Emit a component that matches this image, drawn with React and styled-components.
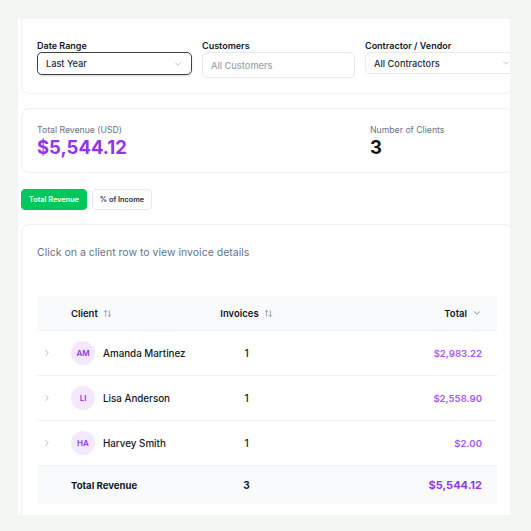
import React from 'react';
import styled, { createGlobalStyle } from 'styled-components';
import { ChevronDown, ChevronRight, ArrowUpDown } from 'lucide-react';

const GlobalStyle = createGlobalStyle`
  html, body {
    margin: 0;
    padding: 0;
    background: #f4f6f3;
    font-family: Inter, "Noto Sans", sans-serif;
    -webkit-font-smoothing: antialiased;
  }
  * { box-sizing: border-box; }
`;

const Page = styled.div`
  width: 531px;
  height: 531px;
  padding: 19px 21px 16px 18px;
`;

const Panel = styled.main`
  width: 492px;
  height: 496px;
  background: #ffffff;
  overflow: hidden;
`;

const Content = styled.div`
  margin-top: -9px;
  padding-left: 3px;
  display: flex;
  flex-direction: column;
`;

const Card = styled.section`
  width: 492px;
  background: #ffffff;
  border: 1px solid #eef0f3;
  border-radius: 8px;
`;

const FilterCard = styled(Card)`
  padding: 29px 15px 15px;
`;

const FilterGrid = styled.div`
  display: grid;
  grid-template-columns: 155px 153px 155px;
  column-gap: 10px;
`;

const Field = styled.div`
  display: flex;
  flex-direction: column;
  gap: 1px;
`;

const Label = styled.label`
  font-size: 9px;
  line-height: 11px;
  font-weight: 600;
  color: #111827;
`;

const SelectBox = styled.div`
  height: ${(p) => p.h}px;
  display: flex;
  align-items: center;
  justify-content: space-between;
  padding: 0 8px 0 8px;
  border: 1px solid ${(p) => (p.focused ? '#3f3f46' : '#e7e9ee')};
  border-radius: 5px;
  font-size: 9.2px;
  font-weight: 500;
  color: ${(p) => (p.placeholder ? '#9ca3af' : '#1f2937')};
  background: #fff;
  ${(p) => p.focused && 'box-shadow: 0 1px 2px rgba(0,0,0,0.15);'}

  svg {
    color: #9ca3af;
  }
`;

const StatsCard = styled(Card)`
  margin-top: 14px;
  padding: 15px 15px 14px;
  display: grid;
  grid-template-columns: 333px 1fr;
`;

const Stat = styled.div`
  display: flex;
  flex-direction: column;
`;

const StatLabel = styled.div`
  font-size: 8.7px;
  line-height: 12px;
  color: #6b7280;
`;

const StatValue = styled.div`
  font-size: 18.5px;
  line-height: 22px;
  font-weight: 700;
  color: ${(p) => p.color || '#111111'};
`;

const Tabs = styled.div`
  margin-top: 16px;
  display: flex;
  gap: 5px;
`;

const TabButton = styled.button`
  height: 21px;
  padding: 0 7px;
  border-radius: 4px;
  border: 1px solid ${(p) => (p.active ? '#00c85a' : '#e5e7eb')};
  background: ${(p) => (p.active ? '#00c85a' : '#ffffff')};
  color: ${(p) => (p.active ? '#ffffff' : '#1f2937')};
  font-family: inherit;
  font-size: 7.3px;
  font-weight: 600;
`;

const TableCard = styled(Card)`
  margin-top: 14px;
  padding: 20px 15px 40px;
`;

const Hint = styled.p`
  margin: 0 0 35px 0;
  font-size: 10.5px;
  line-height: 16px;
  color: #64748b;
`;

const Row = styled.div`
  display: grid;
  grid-template-columns: 34px 135px 81px 1fr;
  align-items: center;
  height: ${(p) => p.h}px;
  padding-right: 15px;
  background: ${(p) => (p.shaded ? '#f8fafc' : '#ffffff')};
  border-bottom: ${(p) => (p.last ? 'none' : '1px solid #eef1f5')};
`;

const HeadCell = styled.div`
  display: flex;
  align-items: center;
  justify-content: ${(p) => p.justify || 'flex-start'};
  gap: 5px;
  font-size: 9.5px;
  font-weight: 600;
  color: #111827;

  svg {
    color: #6b7280;
  }
`;

const ExpandCell = styled.div`
  display: flex;
  padding-left: 5px;
  color: #8b93a1;
`;

const ClientCell = styled.div`
  display: flex;
  align-items: center;
  gap: 8px;
  font-size: 9.8px;
  font-weight: 500;
  color: #111827;
`;

const Avatar = styled.span`
  width: 24px;
  height: 24px;
  border-radius: 50%;
  background: #f3e8ff;
  color: #9333ea;
  font-size: 8px;
  font-weight: 600;
  display: flex;
  align-items: center;
  justify-content: center;
`;

const CountCell = styled.div`
  text-align: center;
  font-size: 10px;
  font-weight: ${(p) => (p.bold ? 700 : 500)};
  color: #111827;
`;

const AmountCell = styled.div`
  text-align: right;
  font-size: ${(p) => (p.big ? '11px' : '9.6px')};
  font-weight: ${(p) => (p.big ? 700 : 600)};
  color: ${(p) => (p.big ? '#9333ea' : '#a855f7')};
`;

const TotalLabel = styled.div`
  font-size: 9.6px;
  font-weight: 700;
  color: #111827;
`;

const clients = [
  { initials: 'AM', name: 'Amanda Martinez', invoices: 1, total: '$2,983.22' },
  { initials: 'LI', name: 'Lisa Anderson', invoices: 1, total: '$2,558.90' },
  { initials: 'HA', name: 'Harvey Smith', invoices: 1, total: '$2.00' },
];

export default function App() {
  return (
    <>
      <GlobalStyle />
      <Page>
        <Panel>
          <Content>
            <FilterCard>
              <FilterGrid>
                <Field>
                  <Label>Date Range</Label>
                  <SelectBox h={23} focused>
                    Last Year
                    <ChevronDown size={10} strokeWidth={1.5} />
                  </SelectBox>
                </Field>
                <Field>
                  <Label>Customers</Label>
                  <SelectBox h={26} placeholder>
                    All Customers
                  </SelectBox>
                </Field>
                <Field>
                  <Label>Contractor / Vendor</Label>
                  <SelectBox h={22}>
                    All Contractors
                    <ChevronDown size={10} strokeWidth={1.5} />
                  </SelectBox>
                </Field>
              </FilterGrid>
            </FilterCard>

            <StatsCard>
              <Stat>
                <StatLabel>Total Revenue (USD)</StatLabel>
                <StatValue color="#9333ea">$5,544.12</StatValue>
              </Stat>
              <Stat>
                <StatLabel>Number of Clients</StatLabel>
                <StatValue>3</StatValue>
              </Stat>
            </StatsCard>

            <Tabs>
              <TabButton active>Total Revenue</TabButton>
              <TabButton>% of Income</TabButton>
            </Tabs>

            <TableCard>
              <Hint>Click on a client row to view invoice details</Hint>
              <Row h={35} shaded>
                <div />
                <HeadCell>
                  Client <ArrowUpDown size={9} strokeWidth={1.5} />
                </HeadCell>
                <HeadCell justify="center">
                  Invoices <ArrowUpDown size={9} strokeWidth={1.5} />
                </HeadCell>
                <HeadCell justify="flex-end">
                  Total <ChevronDown size={10} strokeWidth={2} />
                </HeadCell>
              </Row>
              {clients.map((c) => (
                <Row h={45} key={c.name}>
                  <ExpandCell>
                    <ChevronRight size={10} strokeWidth={1.5} />
                  </ExpandCell>
                  <ClientCell>
                    <Avatar>{c.initials}</Avatar>
                    {c.name}
                  </ClientCell>
                  <CountCell>{c.invoices}</CountCell>
                  <AmountCell>{c.total}</AmountCell>
                </Row>
              ))}
              <Row h={38} shaded last>
                <div />
                <TotalLabel>Total Revenue</TotalLabel>
                <CountCell bold>3</CountCell>
                <AmountCell big>$5,544.12</AmountCell>
              </Row>
            </TableCard>
          </Content>
        </Panel>
      </Page>
    </>
  );
}
